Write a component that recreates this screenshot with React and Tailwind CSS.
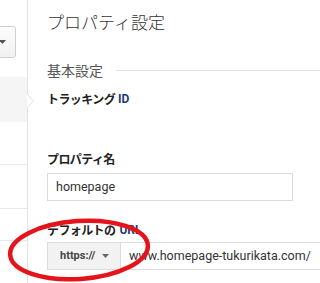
import React from "react";

const jp = { fontFamily: '"Noto Sans CJK JP", "Noto Sans", sans-serif' };
const ro = { fontFamily: 'Roboto, "Liberation Sans", Arial, sans-serif' };

export default function App() {
  return (
    <div className="relative w-[320px] h-[283px] overflow-hidden bg-white flex" style={jp}>
      {/* sidebar */}
      <div className="w-[28px] shrink-0 border-r border-[#e4e4e4] flex flex-col">
        <div className="h-[26px]" />
        <div className="h-[32px] w-[60px] ml-[-44px] rounded-[3px] border border-[#cfcfcf] bg-gradient-to-b from-[#fcfcfc] to-[#f1f1f1] flex items-center justify-end pr-[9px]">
          <svg width="7" height="4" viewBox="0 0 7 4"><path d="M0 0h7L3.5 4z" fill="#555" /></svg>
        </div>
        <div className="h-[19px]" />
        <div className="h-[45px] bg-[#f5f5f5]" />
        <div className="h-[43px] border-b border-[#e8e8e8]" />
        <div className="h-[44px] border-b border-[#e8e8e8]" />
        <div className="h-[32px] border-b border-[#e8e8e8]" />
      </div>

      {/* main */}
      <div className="flex-1 pl-[19px] flex flex-col">
        <div className="mt-[10px] h-[24px] leading-[24px] text-[17px] font-light text-[#333] whitespace-nowrap">プロパティ設定</div>
        <div className="mt-[26px] h-[20px] flex items-center">
          <span className="text-[14px] leading-[20px] text-[#555] whitespace-nowrap">基本設定</span>
          <div className="ml-[13px] flex-1 h-px bg-[#e2e2e2]" />
        </div>
        <div className="mt-[9px] h-[20px] flex items-center text-[12px] font-bold text-[#222] whitespace-nowrap">
          <span className="tracking-[-0.6px]">トラッキング</span>
          <span className="ml-[3px] text-[#1d3c78] text-[12px]" style={ro}>ID</span>
        </div>
        <div className="mt-[40px] h-[20px] flex items-center text-[12px] font-bold text-[#222] whitespace-nowrap">
          <span className="tracking-[-0.6px]">プロパティ名</span>
        </div>
        <div className="mt-[4px] h-[28px] w-[246px] border border-[#dcdcdc] flex items-center pl-[8px] text-[12.5px] text-[#333]" style={ro}>homepage</div>
        <div className="mt-[19px] h-[20px] flex items-center text-[12px] font-bold text-[#222] whitespace-nowrap">
          <span className="tracking-[-0.6px]">デフォルトの</span>
          <span className="ml-[4px] text-[#1d3c78]" style={ro}>URL</span>
        </div>
        <div className="mt-[2px] h-[28px] flex">
          <div className="w-[74px] shrink-0 border border-[#dcdcdc] bg-[#f2f2f2] flex items-center pl-[12px]" style={ro}>
            <span className="text-[11px] font-bold text-[#444]">https://</span>
            <svg className="ml-[7px]" width="7" height="4" viewBox="0 0 7 4"><path d="M0 0h7L3.5 4z" fill="#666" /></svg>
          </div>
          <div className="flex-1 border-y border-[#dcdcdc] flex items-center pl-[8px] text-[12.5px] text-[#333] whitespace-nowrap" style={ro}>
            www.homepage-tukurikata.com/
          </div>
        </div>
      </div>

      {/* sidebar notch */}
      <svg className="absolute left-[27px] top-[94px] pointer-events-none" width="8" height="14" viewBox="0 0 8 14">
        <path d="M0 0L6.5 7L0 14z" fill="#fff" />
        <path d="M0.5 0.5L6.5 7L0.5 13.5" fill="none" stroke="#e0e0e0" strokeWidth="1" />
      </svg>

      {/* red annotation ellipse */}
      <svg className="absolute left-0 top-0 pointer-events-none" width="320" height="283" viewBox="0 0 320 283">
        <ellipse cx="79" cy="250" rx="69" ry="29" transform="rotate(-4 79 250)" fill="none" stroke="#e5141c" strokeWidth="4.5" />
      </svg>
    </div>
  );
}
